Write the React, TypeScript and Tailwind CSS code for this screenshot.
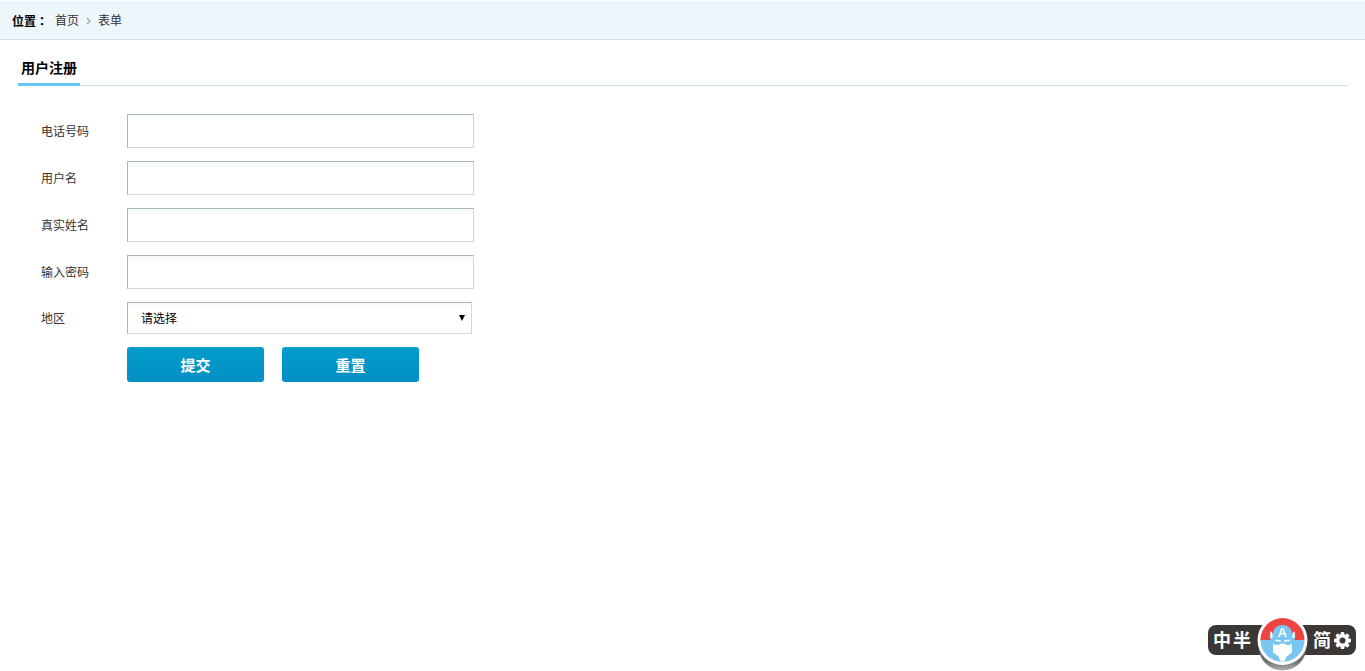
const fields = [
  { id: "phone", label: "电话号码", type: "text" },
  { id: "username", label: "用户名", type: "text" },
  { id: "realname", label: "真实姓名", type: "text" },
  { id: "password", label: "输入密码", type: "password" },
];

const controlClass =
  "border border-t-[#a7b5bc] border-l-[#a7b5bc] border-r-[#ced9df] border-b-[#ced9df] bg-linear-to-b from-[#f7f9fa] to-white to-[6px] outline-none";

const labelClass = "w-[86px] pt-0.5";

const buttonClass =
  "h-[35px] w-[137px] cursor-pointer rounded-[3px] bg-linear-to-b from-[#039ccb] to-[#0390c4] pt-0.5 text-[15px] font-bold text-white";

function Breadcrumb() {
  return (
    <nav className="mt-px flex h-[39px] items-center border-b border-[#d5dfe5] bg-[#edf6fb] px-3 pt-0.5">
      <span className="font-['Noto_Sans_CJK_TC',sans-serif] leading-4 font-bold text-black">位置：</span>
      <ul className="ml-[7px] flex items-center">
        <li>
          <a href="#">首页</a>
        </li>
        <li className="flex w-[19px] justify-center">
          <svg viewBox="0 0 5 8" className="h-2 w-[5px]">
            <path d="M1 1L4 4L1 7" fill="none" stroke="#93a9b2" strokeWidth="1.3" />
          </svg>
        </li>
        <li>
          <a href="#">表单</a>
        </li>
      </ul>
    </nav>
  );
}

function InputMethodBar() {
  return (
    <div className="fixed right-[9px] bottom-4 flex h-[30px] w-[148px] items-center justify-between rounded-lg bg-[#3b3734] px-[5px] pt-0.5 text-lg font-bold text-white">
      <span className="flex gap-0.5">
        <span>中</span>
        <span>半</span>
      </span>
      <span className="flex items-center gap-[3px]">
        <span>简</span>
        <svg viewBox="0 0 18 18" className="mb-0.5 h-[17px] w-[17px]">
          <g fill="#fff">
            {[0, 45, 90, 135].map((angle) => (
              <rect key={angle} x="7" y="0" width="4" height="18" rx="1" transform={`rotate(${angle} 9 9)`} />
            ))}
            <circle cx="9" cy="9" r="6.8" />
          </g>
          <circle cx="9" cy="9" r="3.2" fill="#3b3734" />
        </svg>
      </span>

      {/* Mascot */}
      <svg viewBox="0 0 52 57" className="absolute -top-[11px] left-12 h-[57px] w-[52px]">
        <defs>
          <clipPath id="face">
            <circle cx="26.5" cy="26" r="22" />
          </clipPath>
          <linearGradient id="shadow" x1="0" y1="0" x2="0" y2="1">
            <stop offset="0.8" stopColor="#6d7072" />
            <stop offset="1" stopColor="#aeb1b3" />
          </linearGradient>
        </defs>
        <circle cx="26.5" cy="32.5" r="24" fill="url(#shadow)" />
        <circle cx="26.5" cy="26" r="25" fill="#fff" />
        <g clipPath="url(#face)">
          <rect width="52" height="26" fill="#ee4341" />
          <rect y="26" width="52" height="26" fill="#79c6f1" />
          <path d="M17 27V20C17 8 36 8 36 20V27Z" fill="#79c6f1" />
          <path d="M14 18Q13 24 15 27H18V20H16ZM39 18Q40 24 38 27H35V20H37Z" fill="#79c6f1" />
          <path d="M14.5 17L16.5 19V24H14.5ZM38.5 17L36.5 19V24H38.5Z" fill="#fff" />
          <path d="M19 26.6Q22 26 25 27.4M28 27.4Q31 26 34 26.6" stroke="#fff" strokeWidth="1.5" fill="none" />
          <path d="M17 29.5Q20 32 23 30.5Q26.5 28.5 30 30.5Q33 32 36 29.5V38.5L30.5 42.5L28.5 47.5H24.5L22.5 42.5L17 38.5Z" fill="#fff" />
        </g>
        <text x="26.5" y="23" textAnchor="middle" fontSize="13" fontWeight="700" fill="#fff" fontFamily="Liberation Sans, sans-serif">
          A
        </text>
      </svg>
    </div>
  );
}

export default function App() {
  return (
    <div className="flow-root bg-white font-['Liberation_Sans','Noto_Sans_CJK_SC',sans-serif] text-xs text-[#333]">
      <Breadcrumb />

      <main className="mt-[11px] mr-[17px] ml-[18px]">
        <div className="flex border-b border-[#d0dee5]">
          <h1 className="-mb-px h-[35px] border-b-[3px] border-[#66c9f3] px-[3px] text-sm leading-[34px] font-bold text-black">
            用户注册
          </h1>
        </div>

        <form className="mt-7 ml-[23px] flex flex-col gap-[13px]">
          {fields.map((field) => (
            <div key={field.id} className="flex items-center">
              <label htmlFor={field.id} className={labelClass}>
                {field.label}
              </label>
              <input id={field.id} type={field.type} className={`h-[34px] w-[347px] px-2.5 ${controlClass}`} />
            </div>
          ))}

          <div className="flex items-center">
            <label htmlFor="area" className={labelClass}>
              地区
            </label>
            <div className="relative">
              <select id="area" className={`h-8 w-[345px] appearance-none pt-0.5 pr-6 pl-[13px] text-black ${controlClass}`}>
                <option>请选择</option>
              </select>
              <svg viewBox="0 0 6 6" className="pointer-events-none absolute top-[13px] right-[7px] h-1.5 w-1.5">
                <path d="M0 0H6L3 6Z" />
              </svg>
            </div>
          </div>

          <div className="ml-[86px] flex gap-[18px]">
            <button type="submit" className={buttonClass}>
              提交
            </button>
            <button type="reset" className={buttonClass}>
              重置
            </button>
          </div>
        </form>
      </main>

      <InputMethodBar />
    </div>
  );
}
